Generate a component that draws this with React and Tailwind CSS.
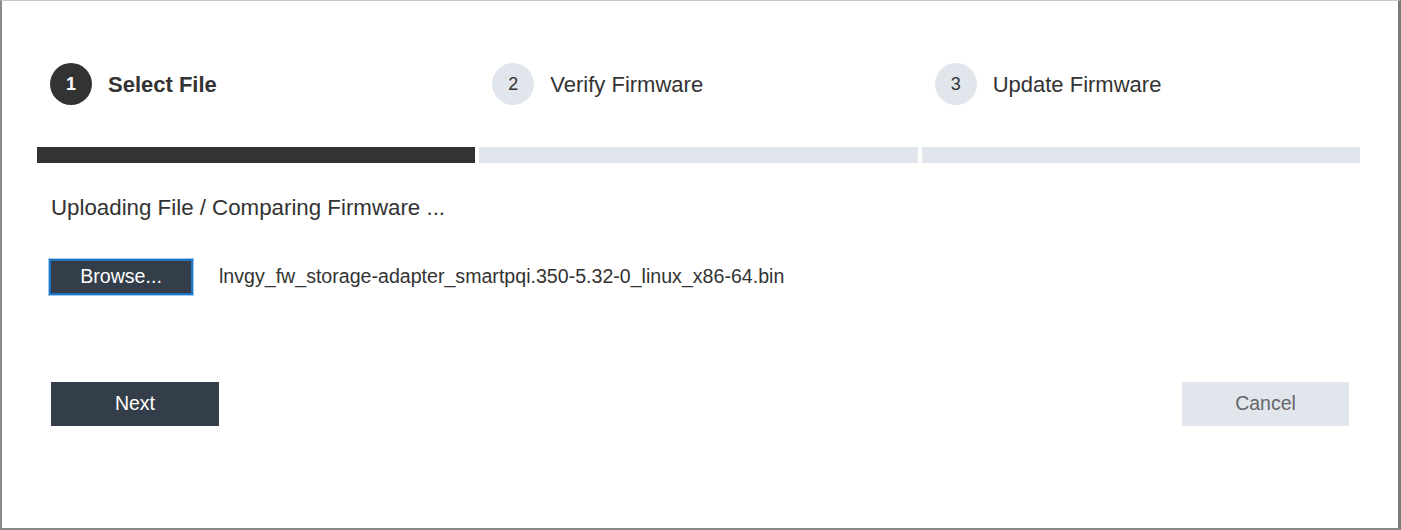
export default function App() {
  const steps = [
    { n: 1, label: "Select File", active: true },
    { n: 2, label: "Verify Firmware", active: false },
    { n: 3, label: "Update Firmware", active: false },
  ];

  return (
    <div
      className="w-[1401px] h-[530px] bg-white border-l-2 border-l-[#8a8a8a] border-t border-t-[#c8c8c8] border-r-[3px] border-r-[#7a7a7a] border-b-2 border-b-[#8a8a8a] pt-[62px] pl-[35px] pr-[38px] text-[#333]"
      style={{ fontFamily: '"Liberation Sans", Arial, sans-serif' }}
    >
      {/* steps */}
      <div className="grid grid-cols-3 gap-1">
        {steps.map((s) => (
          <div key={s.n} className="flex items-center pl-[13px] gap-4">
            <div
              className={
                s.active
                  ? "w-[42px] h-[42px] rounded-full bg-[#333] text-white flex items-center justify-center text-[18px] font-bold"
                  : "w-[42px] h-[42px] rounded-full bg-[#e1e5ec] text-[#333] flex items-center justify-center text-[18px]"
              }
            >
              {s.n}
            </div>
            <span className={s.active ? "text-[22px] font-bold" : "text-[22px]"}>
              {s.label}
            </span>
          </div>
        ))}
      </div>

      {/* progress */}
      <div className="grid grid-cols-3 gap-1 h-4 mt-[42px]">
        <div className="bg-[#333]" />
        <div className="bg-[#e1e5ec]" />
        <div className="bg-[#e1e5ec]" />
      </div>

      <div className="mt-[32px] pl-[14px] text-[22.3px] leading-[26px]">
        Uploading File / Comparing Firmware ...
      </div>

      <div className="mt-[38px] flex items-center pl-[12px]">
        <button className="w-[144px] h-[36px] bg-[#343e4a] text-white text-[19.6px] border-2 border-[#1f74c4] outline outline-1 outline-[#9fcaf5]">
          Browse...
        </button>
        <span className="ml-[26px] text-[19.6px]">
          lnvgy_fw_storage-adapter_smartpqi.350-5.32-0_linux_x86-64.bin
        </span>
      </div>

      <div className="mt-[87px] flex justify-between pl-[14px] pr-[11px]">
        <button className="w-[168px] h-[44px] bg-[#343e4a] text-white text-[19.5px]">
          Next
        </button>
        <button className="w-[167px] h-[44px] bg-[#e1e5ec] text-[#666] text-[19.5px]">
          Cancel
        </button>
      </div>
    </div>
  );
}
